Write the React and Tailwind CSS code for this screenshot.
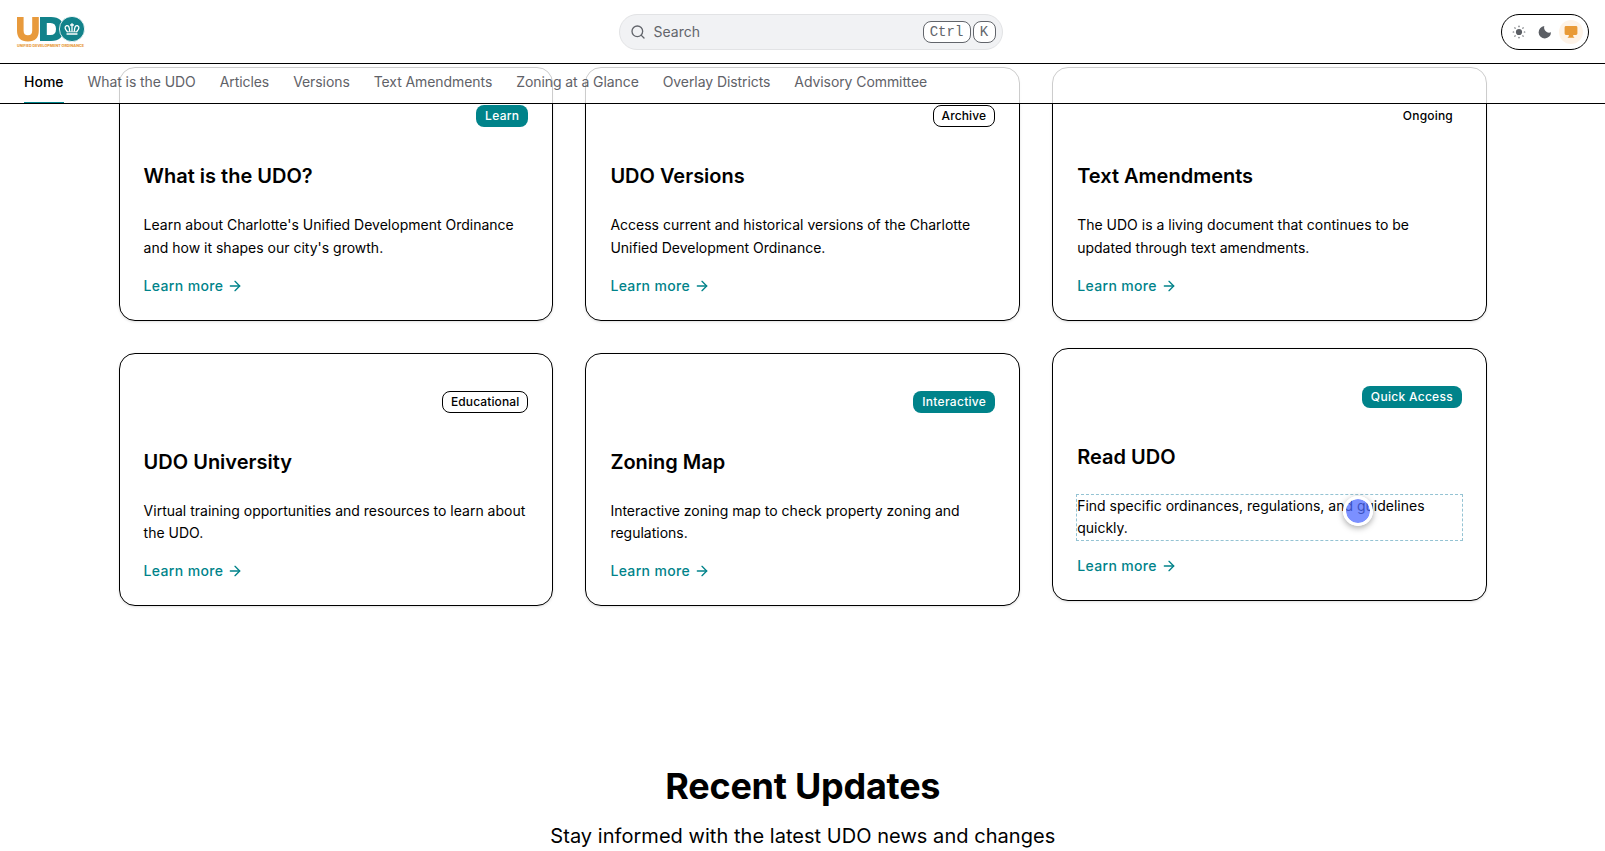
import { ArrowRight, Search } from "lucide-react";

const navItems = [
  "Home",
  "What is the UDO",
  "Articles",
  "Versions",
  "Text Amendments",
  "Zoning at a Glance",
  "Overlay Districts",
  "Advisory Committee",
];

const cards = [
  { title: "What is the UDO?", badge: "Learn", tone: "solid", text: "Learn about Charlotte's Unified Development Ordinance and how it shapes our city's growth." },
  { title: "UDO Versions", badge: "Archive", tone: "outline", text: "Access current and historical versions of the Charlotte Unified Development Ordinance." },
  { title: "Text Amendments", badge: "Ongoing", tone: "plain", text: "The UDO is a living document that continues to be updated through text amendments." },
  { title: "UDO University", badge: "Educational", tone: "outline", text: "Virtual training opportunities and resources to learn about the UDO." },
  { title: "Zoning Map", badge: "Interactive", tone: "solid", text: "Interactive zoning map to check property zoning and regulations." },
  { title: "Read UDO", badge: "Quick Access", tone: "solid", text: "Find specific ordinances, regulations, and guidelines quickly.", hovered: true },
];

const badgeTones = {
  solid: "border-transparent bg-[#00838a] text-white tracking-[0.3px]",
  outline: "border-black text-black tracking-[0.12px]",
  plain: "border-transparent text-black tracking-[0.2px]",
};

function Logo() {
  return (
    <svg className="h-8 w-[70px]" viewBox="0 0 70 32" aria-label="UDO">
      <path d="M1 1H7.6V14.8Q7.6 19.3 11.9 19.3Q16.2 19.3 16.2 14.8V1H22.8V14.5Q22.8 25.5 11.9 25.5Q1 25.5 1 14.5Z" fill="#e89a3c" />
      <path fillRule="evenodd" d="M24 1H35Q47.5 1 47.5 13Q47.5 25 35 25H24ZM30.8 7V19H34.5Q40 19 40 13Q40 7 34.5 7Z" fill="#12828a" />
      <circle cx="56" cy="13" r="12.6" fill="#12828a" stroke="#fff" strokeWidth="0.8" />
      <g fill="none" stroke="#fff" strokeWidth="1.3" strokeLinecap="round" strokeLinejoin="round">
        <path d="M51 18H61M51.2 15.5Q47.3 11.2 50.6 9.6Q53.4 9 53.6 15M60.8 15.5Q64.7 11.2 61.4 9.6Q58.6 9 58.4 15M56 7.6V15M54.6 9H57.4" />
        <path d="M51.2 15.8H60.8" strokeWidth="0.9" />
      </g>
      <text x="1" y="30.8" textLength="67" lengthAdjust="spacingAndGlyphs" fontSize="3.6" fontWeight="800" fill="#e89a3c" fontFamily="Inter, sans-serif">UNIFIED DEVELOPMENT ORDINANCE</text>
    </svg>
  );
}

function ThemeToggle() {
  return (
    <div className="flex h-9 w-[88px] items-center justify-center gap-0.5 rounded-full border border-black bg-white text-[#5b5e64]">
      <span className="flex size-6 items-center justify-center">
        <svg className="size-3.5" viewBox="0 0 14 14" fill="currentColor">
          <circle cx="7" cy="7" r="3.1" />
          <path d="M7 1.2V1.7M7 12.3V12.8M1.2 7H1.7M12.3 7H12.8M2.8 2.8L3.2 3.2M10.8 10.8L11.2 11.2M2.8 11.2L3.2 10.8M10.8 3.2L11.2 2.8" stroke="currentColor" strokeWidth="1.2" strokeLinecap="round" />
        </svg>
      </span>
      <span className="flex size-6 items-center justify-center">
        <svg className="size-3.5" viewBox="0 0 14 14" fill="currentColor">
          <path d="M6.3 1.1C5.2 4.9 8.8 9 13 7.3A6.2 6.2 0 1 1 6.3 1.1Z" />
        </svg>
      </span>
      <span className="flex size-6 items-center justify-center rounded-full bg-[#fef3e7] text-[#e99a36]">
        <svg className="size-3.5" viewBox="0 0 14 14" fill="currentColor">
          <path d="M2 1H12Q13.4 1 13.4 2.4V8.6Q13.4 10 12 10H9.2V11.2L10.5 12.7H3.5L4.8 11.2V10H2Q.6 10 .6 8.6V2.4Q.6 1 2 1Z" />
        </svg>
      </span>
    </div>
  );
}

function Card({ title, badge, tone, text, hovered }) {
  return (
    <article className={`rounded-[16px] border border-black bg-white p-6 shadow-sm ${hovered ? "-translate-y-[5px]" : ""}`}>
      <div className="flex h-12 items-center justify-end">
        <span className={`rounded-[8px] border px-2 py-0.5 text-xs font-medium ${badgeTones[tone]}`}>{badge}</span>
      </div>
      <h3 className="mt-[22px] text-xl leading-7 font-semibold">{title}</h3>
      <p className={`mt-6 text-sm leading-[22.75px] ${hovered ? "outline outline-dashed outline-[#94c3d3]" : ""}`}>{text}</p>
      <a className="mt-4 flex items-center gap-1 text-sm leading-5 font-medium tracking-[0.35px] text-[#00838a]">
        Learn more <ArrowRight size={16} />
      </a>
    </article>
  );
}

export default function App() {
  return (
    <div className="relative h-[851px] overflow-hidden bg-white font-[Inter,sans-serif] text-black">
      <header className="absolute inset-x-0 top-0 z-10">
        <div className="flex h-16 items-center justify-between border-b border-black bg-white px-4">
          <div className="w-[86px]"><Logo /></div>
          <div className="ml-[18px] flex h-9 w-96 items-center rounded-full border border-[#e2e3e5] bg-[#f1f2f4] pr-1.5 pl-2.5 text-sm text-[#62656b]">
            <Search size={16} />
            <span className="ml-2 flex-1">Search</span>
            <span className="flex gap-0.5 font-['Liberation_Mono',monospace]">
              <kbd className="flex h-[22px] w-12 items-center justify-center rounded-[8px] border border-[#62656b] bg-white font-[inherit]">Ctrl</kbd>
              <kbd className="flex h-[22px] w-[23px] items-center justify-center rounded-[8px] border border-[#62656b] bg-white font-[inherit]">K</kbd>
            </span>
          </div>
          <ThemeToggle />
        </div>
        <nav className="flex h-10 gap-6 border-b border-black bg-white/80 px-6 text-sm text-[#5f6268]">
          {navItems.map((item, i) => (
            <a key={item} className={`flex h-[39px] items-center border-b pb-0.5 ${i === 0 ? "border-[#00838a] font-medium text-black" : "border-transparent tracking-[-0.08px]"}`}>
              {item}
            </a>
          ))}
        </nav>
      </header>
      <main className="mx-auto max-w-[1400px] pt-[67px] pr-[15.5px] pl-[16.1px]">
        <section className="grid grid-cols-3 gap-8">
          {cards.map((card) => <Card key={card.title} {...card} />)}
        </section>
        <section className="pt-[160px] text-center">
          <h2 className="text-4xl leading-10 font-bold tracking-[-0.25px]">Recent Updates</h2>
          <p className="mt-4 text-xl leading-7 tracking-[0.04px]">Stay informed with the latest UDO news and changes</p>
        </section>
      </main>
      <div className="absolute top-[496px] left-[1343px] z-20 size-[30px] rounded-full border-3 border-white bg-[#4f6bff]/75 bg-clip-padding shadow-[0_2px_6px_rgba(0,0,0,0.35)]" />
    </div>
  );
}
